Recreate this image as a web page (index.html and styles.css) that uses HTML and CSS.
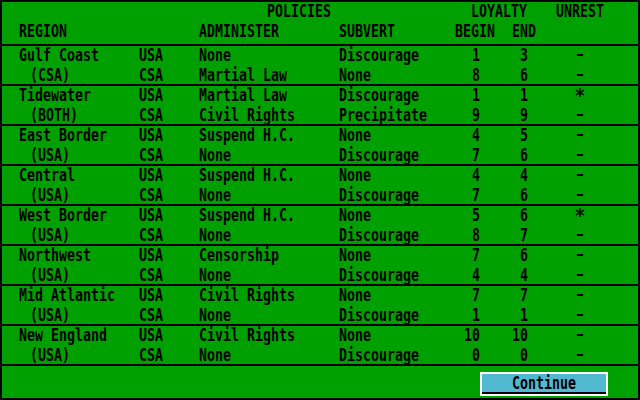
FILE: index.html
```html
<!DOCTYPE html>
<html>
<head>
<meta charset="utf-8">
<link rel="stylesheet" href="styles.css">
</head>
<body>
<div class="screen">
  <div class="head">
    <div class="grid">
      <span class="c policies">POLICIES</span>
      <span class="c loyalty">LOYALTY</span>
      <span class="c u">UNREST</span>
    </div>
    <div class="grid">
      <span class="c r1">REGION</span>
      <span class="c a">ADMINISTER</span>
      <span class="c s">SUBVERT</span>
      <span class="c begin">BEGIN</span>
      <span class="c end">END</span>
    </div>
  </div>

  <div class="group grid">
    <span class="c">Gulf Coast</span><span class="c">USA</span><span class="c">None</span><span class="c">Discourage</span><span class="c n">1</span><span class="c n">3</span><span class="u"><span class="dash">-</span></span>
    <span class="c sub">(CSA)</span><span class="c">CSA</span><span class="c">Martial Law</span><span class="c">None</span><span class="c n">8</span><span class="c n">6</span><span class="u"><span class="dash">-</span></span>
  </div>
  <div class="group grid">
    <span class="c">Tidewater</span><span class="c">USA</span><span class="c">Martial Law</span><span class="c">Discourage</span><span class="c n">1</span><span class="c n">1</span><span class="u"><span class="star">*</span></span>
    <span class="c sub">(BOTH)</span><span class="c">CSA</span><span class="c">Civil Rights</span><span class="c">Precipitate</span><span class="c n">9</span><span class="c n">9</span><span class="u"><span class="dash">-</span></span>
  </div>
  <div class="group grid">
    <span class="c">East Border</span><span class="c">USA</span><span class="c">Suspend H.C.</span><span class="c">None</span><span class="c n">4</span><span class="c n">5</span><span class="u"><span class="dash">-</span></span>
    <span class="c sub">(USA)</span><span class="c">CSA</span><span class="c">None</span><span class="c">Discourage</span><span class="c n">7</span><span class="c n">6</span><span class="u"><span class="dash">-</span></span>
  </div>
  <div class="group grid">
    <span class="c">Central</span><span class="c">USA</span><span class="c">Suspend H.C.</span><span class="c">None</span><span class="c n">4</span><span class="c n">4</span><span class="u"><span class="dash">-</span></span>
    <span class="c sub">(USA)</span><span class="c">CSA</span><span class="c">None</span><span class="c">Discourage</span><span class="c n">7</span><span class="c n">6</span><span class="u"><span class="dash">-</span></span>
  </div>
  <div class="group grid">
    <span class="c">West Border</span><span class="c">USA</span><span class="c">Suspend H.C.</span><span class="c">None</span><span class="c n">5</span><span class="c n">6</span><span class="u"><span class="star">*</span></span>
    <span class="c sub">(USA)</span><span class="c">CSA</span><span class="c">None</span><span class="c">Discourage</span><span class="c n">8</span><span class="c n">7</span><span class="u"><span class="dash">-</span></span>
  </div>
  <div class="group grid">
    <span class="c">Northwest</span><span class="c">USA</span><span class="c">Censorship</span><span class="c">None</span><span class="c n">7</span><span class="c n">6</span><span class="u"><span class="dash">-</span></span>
    <span class="c sub">(USA)</span><span class="c">CSA</span><span class="c">None</span><span class="c">Discourage</span><span class="c n">4</span><span class="c n">4</span><span class="u"><span class="dash">-</span></span>
  </div>
  <div class="group grid">
    <span class="c">Mid Atlantic</span><span class="c">USA</span><span class="c">Civil Rights</span><span class="c">None</span><span class="c n">7</span><span class="c n">7</span><span class="u"><span class="dash">-</span></span>
    <span class="c sub">(USA)</span><span class="c">CSA</span><span class="c">None</span><span class="c">Discourage</span><span class="c n">1</span><span class="c n">1</span><span class="u"><span class="dash">-</span></span>
  </div>
  <div class="group grid">
    <span class="c">New England</span><span class="c">USA</span><span class="c">Civil Rights</span><span class="c">None</span><span class="c n">10</span><span class="c n">10</span><span class="u"><span class="dash">-</span></span>
    <span class="c sub">(USA)</span><span class="c">CSA</span><span class="c">None</span><span class="c">Discourage</span><span class="c n">0</span><span class="c n">0</span><span class="u"><span class="dash">-</span></span>
  </div>

  <div class="foot">
    <button class="btn"><span class="btn-in"><span class="c btxt">Continue</span></span></button>
  </div>
</div>
</body>
</html>
```

FILE: styles.css
```css
html, body {
  margin: 0;
  padding: 0;
  background: #000;
}
.screen {
  width: 640px;
  height: 400px;
  box-sizing: border-box;
  border: 2px solid #000;
  background: #00a000;
  color: #000;
  font-family: "DejaVu Sans Mono", "Liberation Mono", monospace;
  font-weight: bold;
  font-size: 13.3px;
  line-height: 20px;
  display: flex;
  flex-direction: column;
  overflow: hidden;
}
.grid {
  display: grid;
  grid-template-columns: 120px 60px 140px 101px 40px 48px 104px;
  grid-auto-rows: 20px;
  padding-left: 17px;
}
.c {
  display: block;
  white-space: nowrap;
  transform: translateY(1px) scaleY(1.34);
  transform-origin: 0 15px;
}
.head {
  height: 42px;
  border-bottom: 2px solid #000;
}
.head .grid {
  height: 20px;
}
.policies { grid-column: 3 / 5; padding-left: 68px; }
.loyalty { grid-column: 5 / 7; padding-left: 31px; }
.head .u { grid-column: 7; }
.r1 { grid-column: 1; }
.a { grid-column: 3; }
.s { grid-column: 4; }
.begin { grid-column: 5; padding-left: 15px; }
.end { grid-column: 6; padding-left: 32px; }

.group {
  height: 38px;
  grid-template-rows: 20px 18px;
  border-bottom: 2px solid #000;
  overflow: visible;
}
.sub { padding-left: 11px; }
.n { text-align: right; }
.u { text-align: center; }
.dash {
  display: inline-block;
  line-height: 10px;
  transform: translateY(-1px) scale(1.5, 1);
}
.star {
  display: inline-block;
  line-height: 10px;
  transform: scale(1.3, 1.4);
}

.foot {
  flex: 1;
  padding-top: 6px;
  padding-left: 478px;
}
.btn {
  display: block;
  width: 128px;
  height: 24px;
  margin: 0;
  padding: 0;
  box-sizing: border-box;
  border: 2px solid #fff;
  background: #fff;
  font: inherit;
  color: #000;
}
.btn-in {
  display: block;
  height: 20px;
  box-sizing: border-box;
  background: #50b8d0;
  border-bottom: 2px solid #000;
  text-align: center;
}
.btxt {
  line-height: 18px;
  transform: translateY(2px) scaleY(1.34);
  transform-origin: 50% 13px;
}
```
